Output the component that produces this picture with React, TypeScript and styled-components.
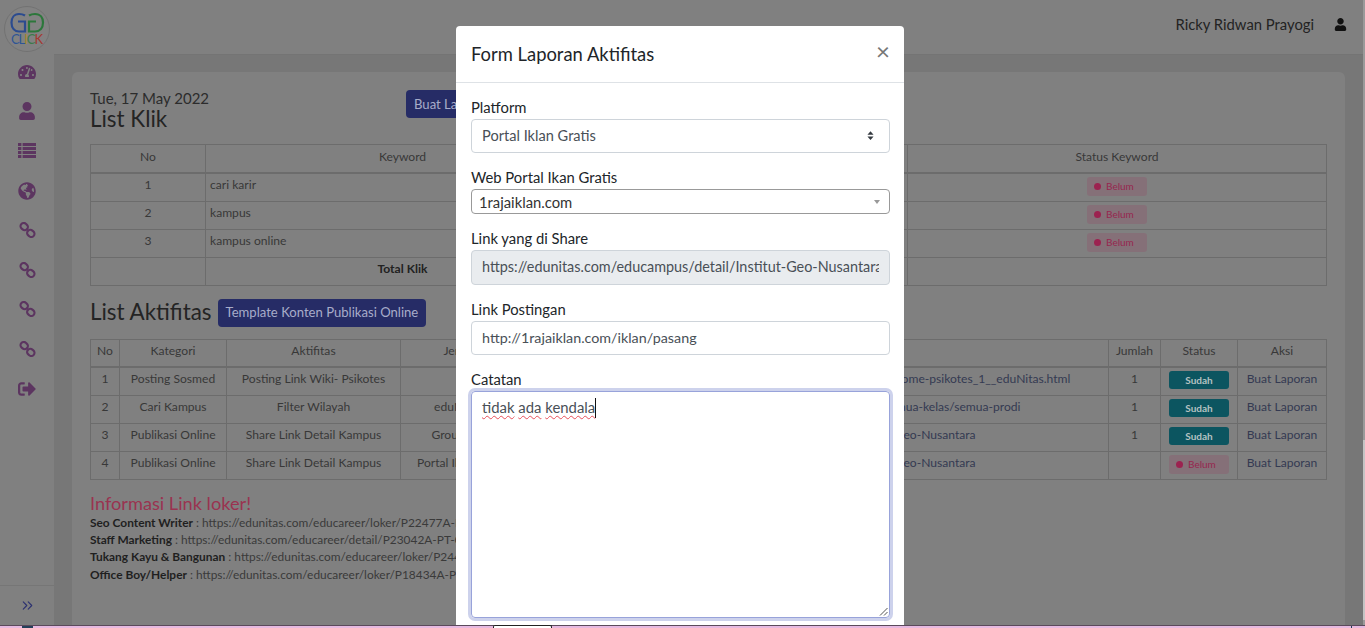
import { createGlobalStyle, styled } from "styled-components";
import {
  FaGlobeAmericas,
  FaSignOutAlt,
  FaTachometerAlt,
  FaUser,
} from "react-icons/fa";
import { ChevronsRight } from "lucide-react";

const GlobalStyle = createGlobalStyle`
  html, body {
    margin: 0;
    height: 100%;
    overflow: hidden;
    background: #808080;
  }
  body {
    font-family: "Lato", "Open Sans", sans-serif;
    color: #2a2a2a;
  }
  * {
    box-sizing: border-box;
  }
`;

const Screen = styled.div`
  display: flex;
  flex-direction: column;
  height: 628px;
`;

const Viewport = styled.div`
  position: relative;
  display: flex;
  height: 625px;
  overflow: hidden;
`;

const Sidebar = styled.nav`
  display: flex;
  flex-direction: column;
  width: 54px;
  flex: none;
  background: #808080;
`;

const LogoSlot = styled.div`
  height: 52px;
  padding: 6px 0 0 4px;
`;

const NavItem = styled.a`
  display: flex;
  align-items: center;
  justify-content: center;
  height: 39.6px;
  color: #5c3560;
  font-size: 18px;
`;

const SidebarFoot = styled.div`
  display: flex;
  align-items: center;
  justify-content: center;
  margin-top: auto;
  height: 40px;
  border-top: 1px solid #767676;
  color: #2c3170;
`;

const Main = styled.div`
  display: flex;
  flex-direction: column;
  flex: 1;
  min-width: 0;
`;

const Topbar = styled.header`
  display: flex;
  align-items: center;
  justify-content: flex-end;
  gap: 20px;
  height: 55px;
  flex: none;
  padding: 0 18px 6px 0;
  background: #808080;
  border-bottom: 1px solid #747474;
  font-size: 14.8px;
  color: #232323;
`;

const UserIcon = styled(FaUser)`
  font-size: 13px;
  color: #111;
`;

const Content = styled.main`
  flex: 1;
  min-height: 0;
  padding: 17px 20px 0 18px;
  background: #777;
`;

const Card = styled.section`
  height: 100%;
  padding: 18px 18px 0;
  background: #808080;
  border-radius: 6px 6px 0 0;
`;

const TitleRow = styled.div`
  display: flex;
  height: 54px;
`;

const TitleBlock = styled.div`
  width: 316px;
`;

const DateText = styled.div`
  font-size: 15px;
  line-height: 17px;
  color: #2c2c2c;
`;

const Heading = styled.h2`
  margin: 0;
  font-size: 22.4px;
  font-weight: 400;
  line-height: 23px;
  color: #242424;
  white-space: nowrap;
`;

const ActivityHeading = styled(Heading)`
  padding-bottom: 3px;
`;

const IndigoButton = styled.button`
  height: 28px;
  padding: 0 8px 1px;
  border: 0;
  border-radius: 4px;
  background: #262c66;
  color: #a8acca;
  font: 13.1px "Lato", sans-serif;
  white-space: nowrap;
`;

const ActivityRow = styled.div`
  display: flex;
  align-items: center;
  gap: 6px;
  height: 28px;
  margin: 13px 0 12px;
`;

const Table = styled.table`
  width: 100%;
  table-layout: fixed;
  border-collapse: collapse;
  font-size: 12.1px;
  color: #383838;
`;

const HeadCell = styled.th<{ $width?: number }>`
  width: ${(p) => (p.$width ? `${p.$width}px` : "auto")};
  height: 28px;
  padding: 0 6px 4px;
  border: 1px solid #6c6c6c;
  border-bottom-width: 2px;
  font-weight: 400;
  text-align: center;
  white-space: nowrap;
  overflow: hidden;
`;

const Cell = styled.td<{ $center?: boolean; $bold?: boolean }>`
  height: 28px;
  padding: 0 4px 5px;
  border: 1px solid #6c6c6c;
  text-align: ${(p) => (p.$center ? "center" : "left")};
  font-weight: ${(p) => (p.$bold ? 700 : 400)};
  color: ${(p) => (p.$bold ? "#222" : "#383838")};
  white-space: nowrap;
  overflow: hidden;
`;

const LinkCell = styled(Cell)`
  padding-left: 98px;
  color: #343a52;
`;

const StatusCell = styled(Cell)`
  padding-left: 8px;
`;

const ActionLink = styled.a`
  color: #343a52;
`;

const Badge = styled.span<{ $done?: boolean }>`
  display: inline-flex;
  align-items: center;
  justify-content: ${(p) => (p.$done ? "center" : "flex-start")};
  gap: 5px;
  width: 60px;
  height: ${(p) => (p.$done ? 18 : 19)}px;
  padding: 0 7px;
  margin-top: 3px;
  border-radius: 3px;
  background: ${(p) => (p.$done ? "#0c5560" : "#857078")};
  color: ${(p) => (p.$done ? "#b4c2c2" : "#97264f")};
  font-size: 10px;
  font-weight: ${(p) => (p.$done ? 700 : 400)};
  vertical-align: middle;
`;

const BadgeDot = styled.i`
  width: 7px;
  height: 7px;
  border-radius: 50%;
  background: #9c2250;
`;

const InfoTitle = styled.h3`
  margin: 12px 0 0;
  font-size: 18.2px;
  font-weight: 400;
  line-height: 22px;
  color: #9a3350;
`;

const InfoLine = styled.div`
  font-size: 11.9px;
  line-height: 17.4px;
  color: #3a3a3a;
  white-space: nowrap;
  b {
    color: #1f1f1f;
  }
`;

const Backdrop = styled.div`
  position: absolute;
  inset: 0;
  display: flex;
  justify-content: center;
  padding: 26px 5px 0 0;
`;

const Modal = styled.div`
  width: 448px;
  height: 700px;
  flex: none;
  background: #fff;
  border-radius: 4px 4px 0 0;
`;

const ModalHeader = styled.div`
  display: flex;
  align-items: flex-start;
  justify-content: space-between;
  height: 57px;
  padding: 16px 14px 0 15px;
  border-bottom: 1px solid #dee2e6;
`;

const ModalTitle = styled.h5`
  margin: 0;
  font-size: 18.4px;
  font-weight: 400;
  line-height: 24px;
  color: #212529;
`;

const CloseMark = styled.span`
  margin-top: -1px;
  font-size: 24px;
  line-height: 20px;
  font-weight: 400;
  color: #777;
`;

const ModalBody = styled.div`
  display: flex;
  flex-direction: column;
  gap: 15px;
  padding: 15px 14px 0 15px;
`;

const Field = styled.div`
  display: flex;
  flex-direction: column;
`;

const Label = styled.label`
  height: 21px;
  font-size: 14.8px;
  line-height: 18.5px;
  color: #212529;
`;

const SelectBox = styled.div`
  display: flex;
  align-items: center;
  justify-content: space-between;
  height: 34px;
  padding: 0 15px 2px 10px;
  border: 1px solid #ced4da;
  border-radius: 4px;
  font-size: 14.6px;
  color: #495057;
`;

const Select2Box = styled.div`
  display: flex;
  align-items: center;
  justify-content: space-between;
  height: 25px;
  padding: 0 9px 0 7px;
  border: 1px solid #999;
  border-radius: 4px;
  font-size: 14.8px;
  color: #333;
`;

const Select2Arrow = styled.i`
  border-style: solid;
  border-width: 4px 3.5px 0;
  border-color: #999 transparent transparent;
`;

const TextInput = styled.input<{ $locked?: boolean; $tall?: number }>`
  width: 100%;
  height: ${(p) => p.$tall ?? 34}px;
  padding: 0 10px 2px;
  border: 1px solid #ced4da;
  border-radius: 4px;
  outline: 0;
  background: ${(p) => (p.$locked ? "#e9ecef" : "#fff")};
  color: #495057;
  font: ${(p) => (p.$locked ? 14.4 : 14.3)}px "Lato", sans-serif;
`;

const NoteBox = styled.div`
  position: relative;
  height: 227px;
  padding: 5px 10px;
  border: 1px solid #98a3da;
  border-radius: 4px;
  box-shadow: 0 0 0 3px #cdd2ec;
  font-size: 14.9px;
  line-height: 21px;
  color: #495057;
`;

const Misspelt = styled.span`
  text-decoration: underline wavy #e8505a 1px;
  text-underline-offset: 2px;
`;

const Caret = styled.i`
  display: inline-block;
  width: 1px;
  height: 20px;
  background: #111;
  vertical-align: -5px;
`;

const ResizeGrip = styled.svg`
  position: absolute;
  right: 1px;
  bottom: 1px;
`;

const ScrollTrack = styled.div`
  position: absolute;
  top: 0;
  right: 0;
  bottom: 0;
  width: 2px;
  background: #9a9a9a;
`;

const ScrollThumb = styled.div`
  height: 180px;
  margin-top: 440px;
  background: #c4c4c4;
`;

const OsStrip = styled.div`
  position: relative;
  height: 3px;
  border-top: 1px solid #5b4a5b;
  background: #e6b9e0;
`;

const OsTab = styled.div`
  position: absolute;
  top: -1px;
  left: 493px;
  width: 59px;
  height: 4px;
  background: #fff;
  border: 1px solid #222;
  border-bottom: 0;
  border-radius: 2px 2px 0 0;
`;

const OsMark = styled.div<{ $left: number; $width: number }>`
  position: absolute;
  top: 0;
  left: ${(p) => p.$left}px;
  width: ${(p) => p.$width}px;
  height: 2px;
  background: #24405a;
`;

function Logo() {
  return (
    <svg width="46" height="46" viewBox="0 0 46 46">
      <circle cx="23" cy="23" r="22.5" fill="#828282" stroke="#727272" />
      <path
        d="M21 9.5 Q18.5 8 15 8 C10 8 7.5 12 7.5 16.5 C7.5 22 10.5 25.5 15 25.5 L21 25.5 L21 15.5 L14 15.5"
        fill="none"
        stroke="#2b4b8f"
        strokeWidth="2.2"
      />
      <path
        d="M25 9.5 Q27.5 8 31 8 C36.5 8 39 12 39 16.5 C39 22 36 25.5 31 25.5 L25 25.5 L25 15.5 L32 15.5"
        fill="none"
        stroke="#2c773b"
        strokeWidth="2.2"
      />
      <text x="7" y="38" fontFamily="Lato, sans-serif" fontSize="13" textLength="32">
        <tspan fill="#2e5596">C</tspan>
        <tspan fill="#2e5596">L</tspan>
        <tspan fill="#a8862a">I</tspan>
        <tspan fill="#3c7a4a">C</tspan>
        <tspan fill="#a5382f">K</tspan>
      </text>
    </svg>
  );
}

function ListIcon() {
  return (
    <svg width="18" height="16" viewBox="0 0 18 16" fill="currentColor">
      {[0, 4, 8, 12].map((y) => (
        <g key={y}>
          <rect x="0" y={y} width="3.4" height="3" />
          <rect x="4.6" y={y} width="13.4" height="3" />
        </g>
      ))}
    </svg>
  );
}

function ChainIcon() {
  return (
    <svg width="17" height="16" viewBox="0 0 17 16" fill="none" stroke="currentColor" strokeWidth="2.2">
      <rect x="1.4" y="1.4" width="7.6" height="6.4" rx="3.2" transform="rotate(40 5.2 4.6)" />
      <rect x="8" y="8.2" width="7.6" height="6.4" rx="3.2" transform="rotate(40 11.8 11.4)" />
    </svg>
  );
}

const keywords = ["cari karir", "kampus", "kampus online"];

const activities = [
  {
    category: "Posting Sosmed",
    task: "Posting Link Wiki- Psikotes",
    kind: "",
    link: "https://edunitas.com/wiki/ts/kumpulan-soal/welcome-psikotes_1__eduNitas.html",
    count: "1",
    done: true,
  },
  {
    category: "Cari Kampus",
    task: "Filter Wilayah",
    kind: "eduNitas.com",
    link: "https://edunitas.com/educampus/semua-kota/semua-kelas/semua-prodi",
    count: "1",
    done: true,
  },
  {
    category: "Publikasi Online",
    task: "Share Link Detail Kampus",
    kind: "Group Sosmed",
    link: "https://edunitas.com/educampus/detail/Institut-Geo-Nusantara",
    count: "1",
    done: true,
  },
  {
    category: "Publikasi Online",
    task: "Share Link Detail Kampus",
    kind: "Portal Iklan Gratisan",
    link: "https://edunitas.com/educampus/detail/Institut-Geo-Nusantara",
    count: "",
    done: false,
  },
];

const jobs = [
  ["Seo Content Writer", "https://edunitas.com/educareer/loker/P22477A-PT-Geo-Click"],
  ["Staff Marketing", "https://edunitas.com/educareer/detail/P23042A-PT-Geo-Click"],
  ["Tukang Kayu & Bangunan", "https://edunitas.com/educareer/loker/P24406A-PT-Geo-Click"],
  ["Office Boy/Helper", "https://edunitas.com/educareer/loker/P18434A-PT-Geo-Click"],
];

function StatusBadge({ done }: { done: boolean }) {
  return done ? (
    <Badge $done>Sudah</Badge>
  ) : (
    <Badge>
      <BadgeDot />
      Belum
    </Badge>
  );
}

export default function App() {
  return (
    <Screen>
      <GlobalStyle />
      <Viewport>
        <Sidebar>
          <LogoSlot>
            <Logo />
          </LogoSlot>
          <NavItem><FaTachometerAlt /></NavItem>
          <NavItem><FaUser /></NavItem>
          <NavItem><ListIcon /></NavItem>
          <NavItem><FaGlobeAmericas /></NavItem>
          <NavItem><ChainIcon /></NavItem>
          <NavItem><ChainIcon /></NavItem>
          <NavItem><ChainIcon /></NavItem>
          <NavItem><ChainIcon /></NavItem>
          <NavItem><FaSignOutAlt /></NavItem>
          <SidebarFoot>
            <ChevronsRight size={17} strokeWidth={1.6} />
          </SidebarFoot>
        </Sidebar>

        <Main>
          <Topbar>
            <span>Ricky Ridwan Prayogi</span>
            <UserIcon />
          </Topbar>
          <Content>
            <Card>
              <TitleRow>
                <TitleBlock>
                  <DateText>Tue, 17 May 2022</DateText>
                  <Heading>List Klik</Heading>
                </TitleBlock>
                <IndigoButton>Buat Laporan</IndigoButton>
              </TitleRow>

              <Table>
                <thead>
                  <tr>
                    <HeadCell $width={115}>No</HeadCell>
                    <HeadCell $width={394}>Keyword</HeadCell>
                    <HeadCell $width={308}>Link</HeadCell>
                    <HeadCell>Status Keyword</HeadCell>
                  </tr>
                </thead>
                <tbody>
                  {keywords.map((word, i) => (
                    <tr key={word}>
                      <Cell $center>{i + 1}</Cell>
                      <Cell>{word}</Cell>
                      <Cell />
                      <Cell $center>
                        <StatusBadge done={false} />
                      </Cell>
                    </tr>
                  ))}
                  <tr>
                    <Cell />
                    <Cell $center $bold>Total Klik</Cell>
                    <Cell />
                    <Cell />
                  </tr>
                </tbody>
              </Table>

              <ActivityRow>
                <ActivityHeading>List Aktifitas</ActivityHeading>
                <IndigoButton>Template Konten Publikasi Online</IndigoButton>
              </ActivityRow>

              <Table>
                <thead>
                  <tr>
                    <HeadCell $width={29}>No</HeadCell>
                    <HeadCell $width={107}>Kategori</HeadCell>
                    <HeadCell $width={174}>Aktifitas</HeadCell>
                    <HeadCell $width={140}>Jenis Web</HeadCell>
                    <HeadCell>Link</HeadCell>
                    <HeadCell $width={52}>Jumlah</HeadCell>
                    <HeadCell $width={77}>Status</HeadCell>
                    <HeadCell $width={89}>Aksi</HeadCell>
                  </tr>
                </thead>
                <tbody>
                  {activities.map((row, i) => (
                    <tr key={row.kind + i}>
                      <Cell $center>{i + 1}</Cell>
                      <Cell $center>{row.category}</Cell>
                      <Cell $center>{row.task}</Cell>
                      <Cell $center>{row.kind}</Cell>
                      <LinkCell>{row.link}</LinkCell>
                      <Cell $center>{row.count}</Cell>
                      <StatusCell>
                        <StatusBadge done={row.done} />
                      </StatusCell>
                      <Cell $center>
                        <ActionLink>Buat Laporan</ActionLink>
                      </Cell>
                    </tr>
                  ))}
                </tbody>
              </Table>

              <InfoTitle>Informasi Link loker!</InfoTitle>
              {jobs.map(([title, url]) => (
                <InfoLine key={title}>
                  <b>{title}</b> : {url}
                </InfoLine>
              ))}
            </Card>
          </Content>
        </Main>

        <Backdrop>
          <Modal>
            <ModalHeader>
              <ModalTitle>Form Laporan Aktifitas</ModalTitle>
              <CloseMark>×</CloseMark>
            </ModalHeader>
            <ModalBody>
              <Field>
                <Label>Platform</Label>
                <SelectBox>
                  Portal Iklan Gratis
                  <svg width="7" height="9" viewBox="0 0 8 10" fill="#343a40">
                    <path d="M4 0 L7.5 4 H.5 Z M4 10 L.5 6 H7.5 Z" />
                  </svg>
                </SelectBox>
              </Field>
              <Field>
                <Label>Web Portal Ikan Gratis</Label>
                <Select2Box>
                  1rajaiklan.com
                  <Select2Arrow />
                </Select2Box>
              </Field>
              <Field>
                <Label>Link yang di Share</Label>
                <TextInput
                  $locked
                  $tall={35}
                  readOnly
                  value="https://edunitas.com/educampus/detail/Institut-Geo-Nusantara"
                />
              </Field>
              <Field>
                <Label>Link Postingan</Label>
                <TextInput readOnly value="http://1rajaiklan.com/iklan/pasang" />
              </Field>
              <Field>
                <Label>Catatan</Label>
                <NoteBox>
                  <Misspelt>tidak</Misspelt> <Misspelt>ada</Misspelt> <Misspelt>kendala</Misspelt>
                  <Caret />
                  <ResizeGrip width="9" height="9" viewBox="0 0 9 9" stroke="#555" fill="none">
                    <path d="M1 8.5 L8.5 1 M5 8.5 L8.5 5" />
                  </ResizeGrip>
                </NoteBox>
              </Field>
            </ModalBody>
          </Modal>
        </Backdrop>

        <ScrollTrack>
          <ScrollThumb />
        </ScrollTrack>
      </Viewport>
      <OsStrip>
        <OsMark $left={22} $width={11} />
        <OsMark $left={1351} $width={1} />
        <OsTab />
      </OsStrip>
    </Screen>
  );
}
